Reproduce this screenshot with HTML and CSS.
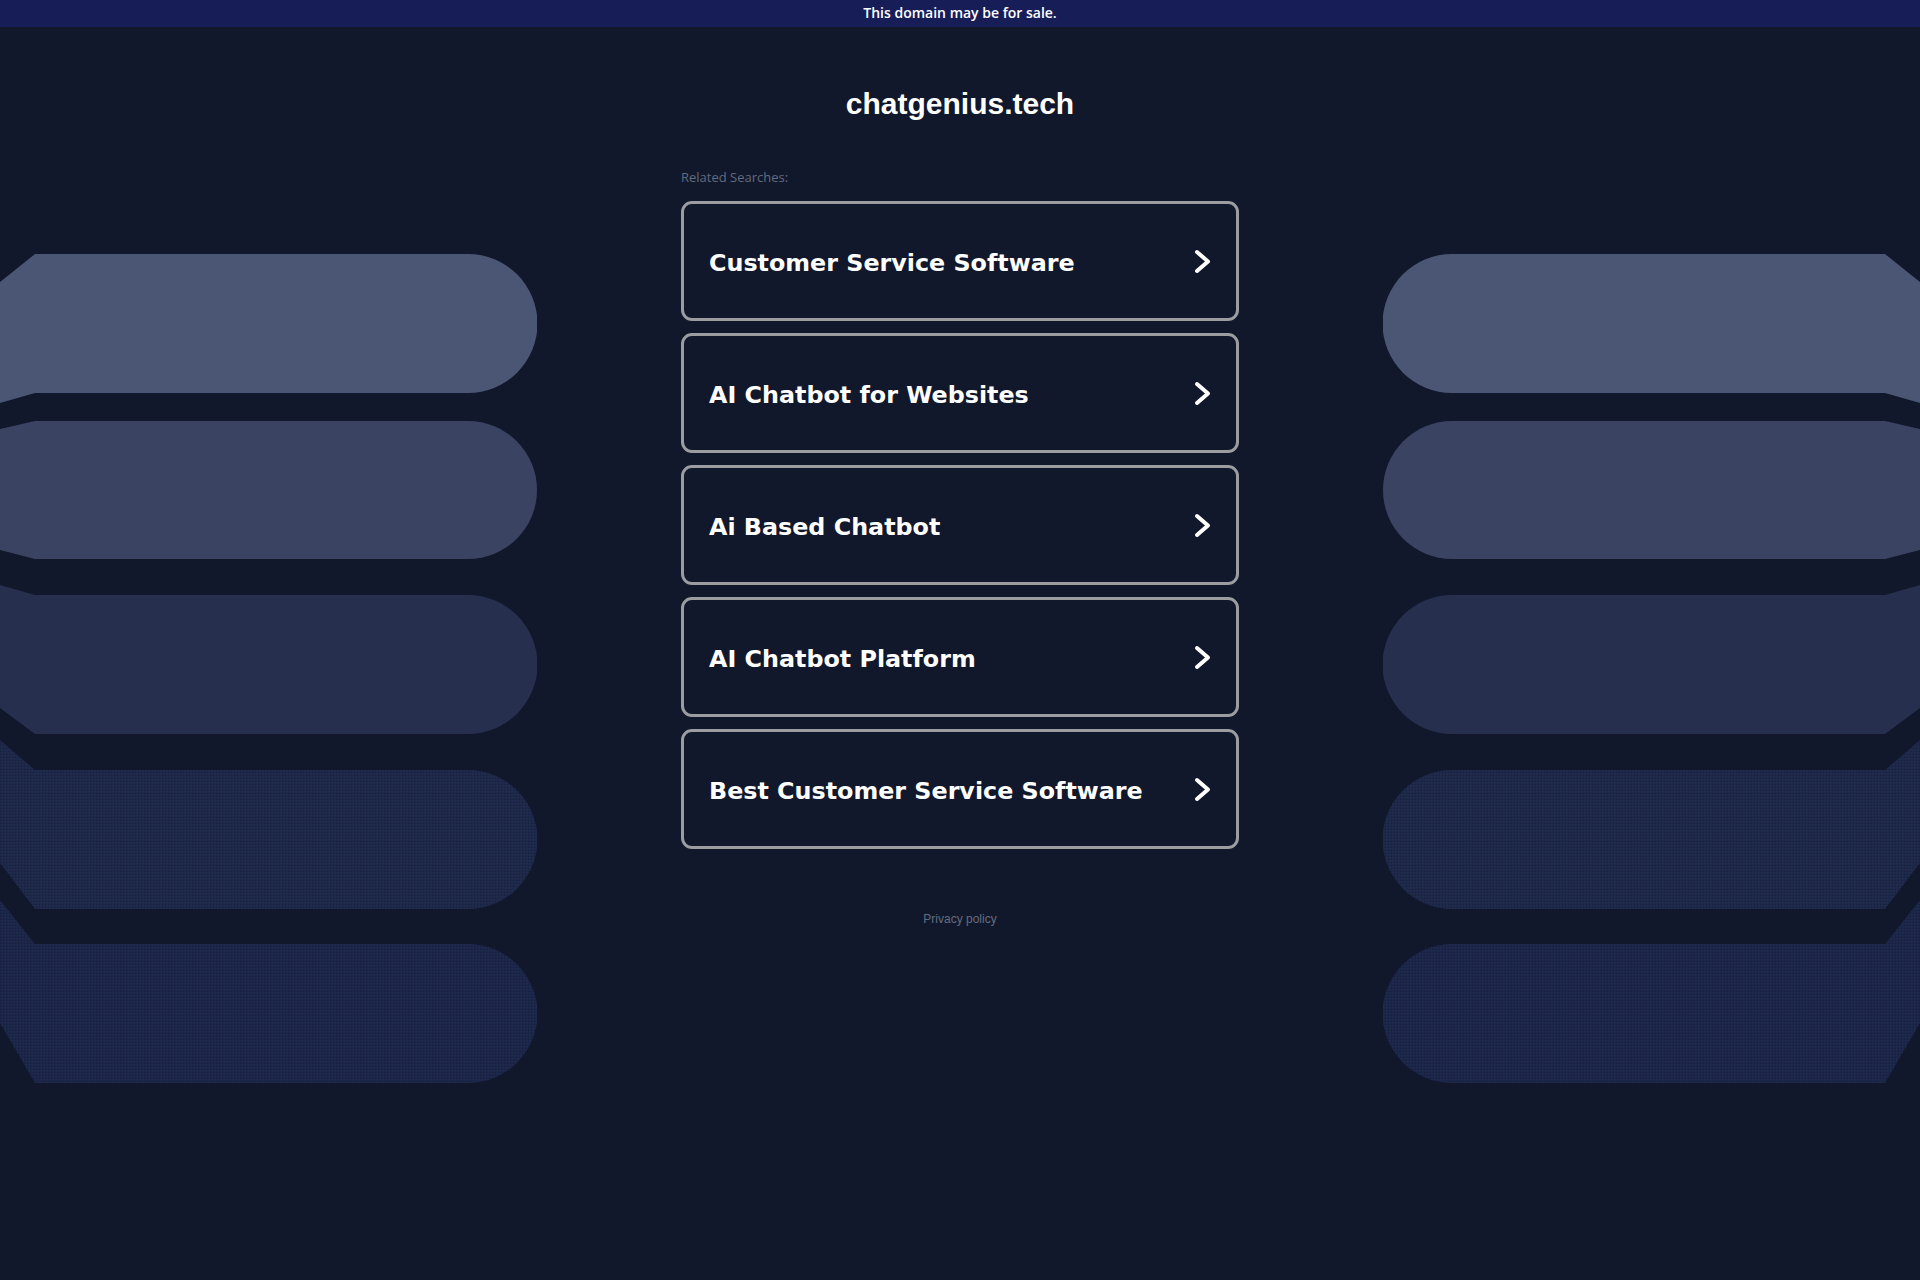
FILE: index.html
```html
<!DOCTYPE html>
<html lang="en">
<head>
  <meta charset="UTF-8">
  <meta name="viewport" content="width=device-width, initial-scale=1.0">
  <title>chatgenius.tech</title>
  <link rel="stylesheet" href="styles.css">
</head>
<body>
  <div class="sale-bar">This domain may be for sale.</div>

  <div class="stage">
    <svg class="deco deco-left" viewBox="0 0 537 840" width="537" height="840" aria-hidden="true">
      <defs>
        <pattern id="grain" width="3" height="3" patternUnits="userSpaceOnUse">
          <rect x="0" y="0" width="1" height="1" fill="#0f1630" opacity="0.5"/>
          <rect x="2" y="1" width="1" height="1" fill="#2a3560" opacity="0.4"/>
        </pattern>
      </defs>
      <path fill="#4b5574" d="M0,32 L35,4 H468 A69.5,69.5 0 0 1 468,143 H35 L0,153 Z"/>
      <path fill="#3a4362" d="M0,179 L35,171 H468 A69,69 0 0 1 468,309 H35 L0,300 Z"/>
      <path fill="#262f4e" d="M0,335 L35,345 H468 A69.5,69.5 0 0 1 468,484 H35 L0,458 Z"/>
      <path fill="#1e2849" d="M0,490 L35,520 H468 A69.5,69.5 0 0 1 468,659 H35 L0,613 Z"/>
      <path fill="url(#grain)" d="M0,490 L35,520 H468 A69.5,69.5 0 0 1 468,659 H35 L0,613 Z"/>
      <path fill="#1c2648" d="M0,650 L35,694 H468 A69.5,69.5 0 0 1 468,833 H35 L0,773 Z"/>
      <path fill="url(#grain)" d="M0,650 L35,694 H468 A69.5,69.5 0 0 1 468,833 H35 L0,773 Z"/>
    </svg>

    <main class="content">
      <h1 class="domain">chatgenius.tech</h1>
      <div class="related-label">Related Searches:</div>

      <div class="search-list">
        <a class="search-card" href="#">
          <span>Customer Service Software</span>
          <svg class="chevron" viewBox="0 0 17 25" width="17" height="25"><path d="M3,3 L14,12.5 L3,22"/></svg>
        </a>
        <a class="search-card" href="#">
          <span>AI Chatbot for Websites</span>
          <svg class="chevron" viewBox="0 0 17 25" width="17" height="25"><path d="M3,3 L14,12.5 L3,22"/></svg>
        </a>
        <a class="search-card" href="#">
          <span>Ai Based Chatbot</span>
          <svg class="chevron" viewBox="0 0 17 25" width="17" height="25"><path d="M3,3 L14,12.5 L3,22"/></svg>
        </a>
        <a class="search-card" href="#">
          <span>AI Chatbot Platform</span>
          <svg class="chevron" viewBox="0 0 17 25" width="17" height="25"><path d="M3,3 L14,12.5 L3,22"/></svg>
        </a>
        <a class="search-card" href="#">
          <span>Best Customer Service Software</span>
          <svg class="chevron" viewBox="0 0 17 25" width="17" height="25"><path d="M3,3 L14,12.5 L3,22"/></svg>
        </a>
      </div>

      <a class="privacy" href="#">Privacy policy</a>
    </main>

    <svg class="deco deco-right" viewBox="0 0 537 840" width="537" height="840" aria-hidden="true">
      <path fill="#4b5574" d="M0,32 L35,4 H468 A69.5,69.5 0 0 1 468,143 H35 L0,153 Z"/>
      <path fill="#3a4362" d="M0,179 L35,171 H468 A69,69 0 0 1 468,309 H35 L0,300 Z"/>
      <path fill="#262f4e" d="M0,335 L35,345 H468 A69.5,69.5 0 0 1 468,484 H35 L0,458 Z"/>
      <path fill="#1e2849" d="M0,490 L35,520 H468 A69.5,69.5 0 0 1 468,659 H35 L0,613 Z"/>
      <path fill="url(#grain)" d="M0,490 L35,520 H468 A69.5,69.5 0 0 1 468,659 H35 L0,613 Z"/>
      <path fill="#1c2648" d="M0,650 L35,694 H468 A69.5,69.5 0 0 1 468,833 H35 L0,773 Z"/>
      <path fill="url(#grain)" d="M0,650 L35,694 H468 A69.5,69.5 0 0 1 468,833 H35 L0,773 Z"/>
    </svg>
  </div>
</body>
</html>
```

FILE: styles.css
```css
* {
  margin: 0;
  padding: 0;
  box-sizing: border-box;
}
html, body {
  background: #11182b;
  min-height: 100vh;
}
body {
  font-family: 'Liberation Sans', Arial, sans-serif;
  color: #fff;
  overflow: hidden;
}

.sale-bar {
  height: 27px;
  background: #171d57;
  text-align: center;
  font-family: 'Open Sans', sans-serif;
  font-weight: 600;
  font-size: 14px;
  line-height: 25px;
  color: #fff;
}

.stage {
  display: grid;
  grid-template-columns: 537px 1fr 537px;
  height: 1253px;
}
.deco {
  display: block;
  margin-top: 223px;
}
.deco-right {
  transform: scaleX(-1);
}

.content {
  width: 558px;
  justify-self: center;
  display: flex;
  flex-direction: column;
}
.domain {
  margin-top: 60px;
  font-size: 30px;
  line-height: 34px;
  font-weight: bold;
  text-align: center;
}
.related-label {
  margin-top: 48px;
  font-family: 'Open Sans', sans-serif;
  font-size: 13px;
  line-height: 17px;
  color: #626b7f;
}
.search-list {
  margin-top: 15px;
  display: flex;
  flex-direction: column;
  gap: 12px;
}
.search-card {
  height: 120px;
  border: 3px solid #9c9da1;
  border-radius: 11px;
  padding: 0 25px;
  display: flex;
  align-items: center;
  justify-content: space-between;
  text-decoration: none;
  color: #fff;
  font-family: 'DejaVu Sans', Verdana, sans-serif;
  font-weight: bold;
  font-size: 23.8px;
}
.search-card span {
  padding-top: 4px;
}
.chevron path {
  fill: none;
  stroke: #fff;
  stroke-width: 4;
  stroke-linecap: round;
  stroke-linejoin: round;
}
.privacy {
  margin-top: 62px;
  align-self: center;
  font-size: 12px;
  line-height: 16px;
  color: #646d80;
  text-decoration: none;
}
```
